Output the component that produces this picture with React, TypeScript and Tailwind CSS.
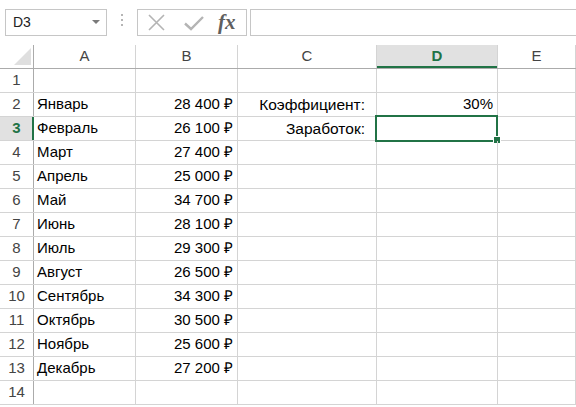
import React from "react";

const months: [string, string][] = [
  ["", ""],
  ["Январь", "28 400 ₽"],
  ["Февраль", "26 100 ₽"],
  ["Март", "27 400 ₽"],
  ["Апрель", "25 000 ₽"],
  ["Май", "34 700 ₽"],
  ["Июнь", "28 100 ₽"],
  ["Июль", "29 300 ₽"],
  ["Август", "26 500 ₽"],
  ["Сентябрь", "34 300 ₽"],
  ["Октябрь", "30 500 ₽"],
  ["Ноябрь", "25 600 ₽"],
  ["Декабрь", "27 200 ₽"],
  ["", ""],
];

const cols = ["A", "B", "C", "D", "E"];
const widths = ["w-[102px]", "w-[102px]", "w-[139px]", "w-[121px]", "w-[78px]"];

function Toolbar() {
  return (
    <div className="flex h-[45px] items-start pt-[9px] pl-[5px]">
      <div className="flex h-[27px] w-[102px] items-center justify-between border border-[#c6c6c6] pl-[7px] pr-[6px] text-[14px] text-[#222]">
        <span>D3</span>
        <svg width="8" height="5" viewBox="0 0 8 5">
          <path d="M0 0h8L4 4z" fill="#7a7a7a" />
        </svg>
      </div>
      <div className="flex w-[30px] flex-col items-center gap-[3px] pt-[5px]">
        <span className="h-[2px] w-[2px] bg-[#b5b5b5]" />
        <span className="h-[2px] w-[2px] bg-[#b5b5b5]" />
        <span className="h-[2px] w-[2px] bg-[#b5b5b5]" />
      </div>
      <div className="flex h-[27px] w-[110px] items-center border border-[#c6c6c6] pl-[9px]">
        <svg width="19" height="19" viewBox="0 0 19 19">
          <path d="M2 2L17 17M17 2L2 17" stroke="#b4b4b4" strokeWidth="1.6" fill="none" />
        </svg>
        <svg className="ml-[18px]" width="20" height="16" viewBox="0 0 20 16">
          <path d="M1 8.5L7 14L19 2" stroke="#b4b4b4" strokeWidth="2.4" fill="none" />
        </svg>
        <span
          className="ml-[14px] text-[21px] font-bold italic leading-none text-[#5f5f5f]"
          style={{ fontFamily: '"Liberation Serif", serif' }}
        >
          fx
        </span>
      </div>
      <div className="ml-[3px] h-[27px] flex-1 border-y border-l border-[#c6c6c6]" />
    </div>
  );
}

function HeaderRow() {
  return (
    <div className="flex h-[24px] border-b border-[#ababab]">
      <div className="relative w-[34px] shrink-0 border-r border-[#ababab]">
        <svg className="absolute left-[14px] top-[3px]" width="17" height="17" viewBox="0 0 17 17">
          <path d="M17 0V17H0z" fill="#dfdfdf" />
        </svg>
      </div>
      {cols.map((c, i) => {
        const sel = c === "D";
        return (
          <div
            key={c}
            className={`${widths[i]} flex shrink-0 items-center justify-center border-r border-[#d4d4d4] ${
              sel ? "bg-[#e1e1e1] font-bold text-[#217346] shadow-[inset_0_-2px_0_#217346]" : "text-[#444]"
            }`}
          >
            {c}
          </div>
        );
      })}
      <div className="flex-1" />
    </div>
  );
}

function Row({ n, month, amount }: { n: number; month: string; amount: string }) {
  const sel = n === 3;
  const cText: Record<number, string> = { 2: "Коэффициент:", 3: "Заработок:" };
  return (
    <div className="flex h-[24px] border-b border-[#d4d4d4]">
      <div
        className={`flex w-[34px] shrink-0 items-center justify-center border-r ${
          sel
            ? "border-[#217346] bg-[#e1e1e1] font-bold text-[#217346] shadow-[inset_-1px_0_0_#217346]"
            : "border-[#ababab] text-[#444]"
        }`}
      >
        {n}
      </div>
      <div className="flex w-[102px] shrink-0 items-center border-r border-[#d4d4d4] pl-[3px] text-black">
        {month}
      </div>
      <div className="flex w-[102px] shrink-0 items-center justify-end border-r border-[#d4d4d4] pr-[4px] text-black">
        {amount}
      </div>
      <div className="flex w-[139px] shrink-0 items-center justify-end border-r border-[#d4d4d4] pr-[11px] text-[15.5px] text-black">
        {cText[n] ?? ""}
      </div>
      <div className="relative flex w-[121px] shrink-0 items-center justify-end border-r border-[#d4d4d4] pr-[4px] text-black">
        {n === 2 ? "30%" : ""}
        {sel && (
          <>
            <div className="absolute -left-[2px] -top-[2px] h-[27px] w-[123px] border-2 border-[#217346]" />
            <div className="absolute -bottom-[4px] -right-[4px] h-[8px] w-[8px] border border-white bg-[#217346]" />
          </>
        )}
      </div>
      <div className="w-[78px] shrink-0 border-r border-[#d4d4d4]" />
      <div className="flex-1" />
    </div>
  );
}

export default function App() {
  return (
    <div
      className="h-[407px] w-[576px] overflow-hidden bg-white text-[15px]"
      style={{ fontFamily: '"Liberation Sans", Arial, sans-serif' }}
    >
      <Toolbar />
      <HeaderRow />
      {months.map(([m, a], i) => (
        <Row key={i} n={i + 1} month={m} amount={a} />
      ))}
    </div>
  );
}
